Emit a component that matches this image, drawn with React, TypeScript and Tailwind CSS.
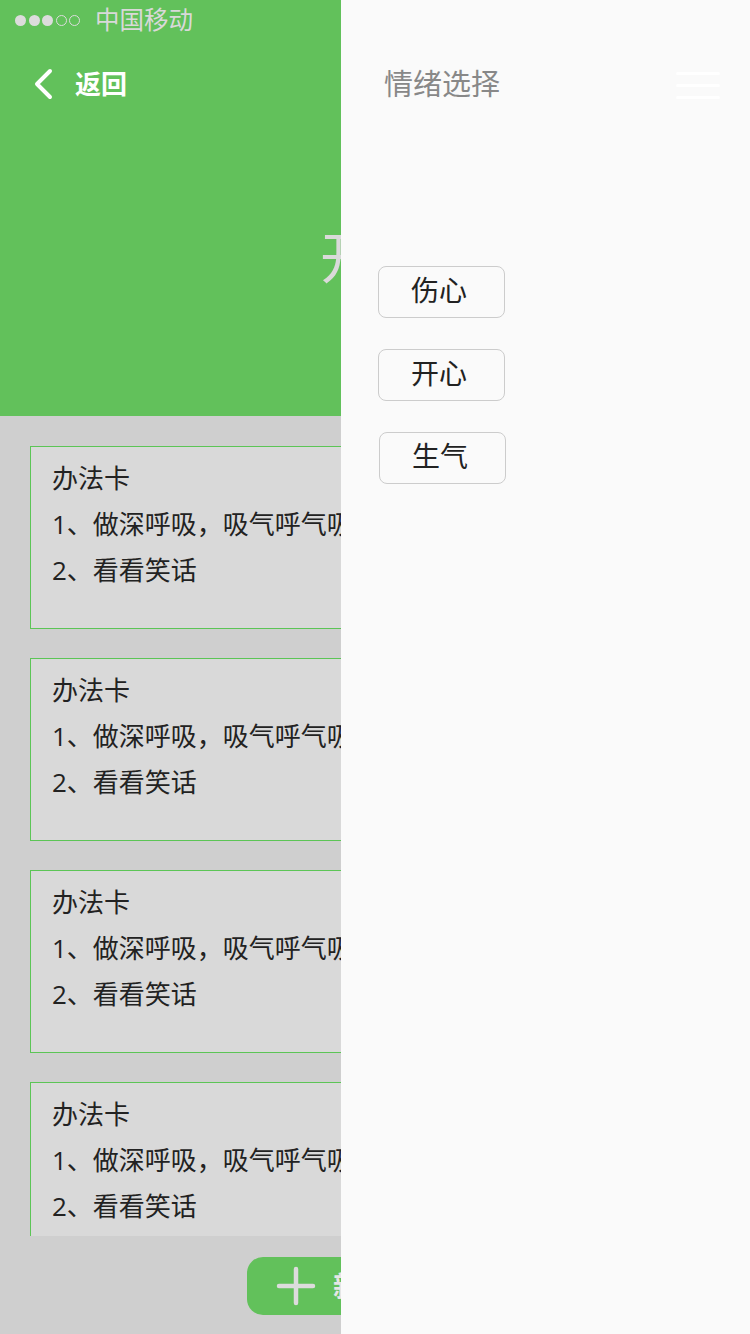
import React from "react";

const font = { fontFamily: '"Open Sans", "Noto Sans CJK SC", sans-serif' };

function Card() {
  return (
    <div className="shrink-0 w-[690px] h-[183px] bg-[#d9d9d9] border border-[#5cc556] pl-[21px] pt-[8px] text-[26px] leading-[46px] text-[#222222]">
      <div>办法卡</div>
      <div className="whitespace-nowrap">1、做深呼吸，吸气呼气吸气呼气吸气呼气</div>
      <div>2、看看笑话</div>
    </div>
  );
}

function MainPage() {
  return (
    <div className="flex flex-col w-[750px] h-[1334px] shrink-0 bg-[#cfcfcf]">
      <div className="h-[416px] bg-[#62c15b] flex flex-col shrink-0">
        <div className="h-[40px] flex items-center pl-[15px] gap-[15px]">
          <div className="flex items-center gap-[2.5px]">
            <span className="w-[11px] h-[11px] rounded-full bg-[#dcdcdc]" />
            <span className="w-[11px] h-[11px] rounded-full bg-[#dcdcdc]" />
            <span className="w-[11px] h-[11px] rounded-full bg-[#dcdcdc]" />
            <span className="w-[11px] h-[11px] rounded-full border border-[#dcdcdc]" />
            <span className="w-[11px] h-[11px] rounded-full border border-[#dcdcdc]" />
          </div>
          <span className="text-[24.5px] text-[#d9d9d9] leading-none">中国移动</span>
        </div>
        <div className="h-[88px] flex items-center pl-[33px] gap-[22px]">
          <svg width="20" height="32" viewBox="0 0 20 32">
            <path d="M17 3 L4 16 L17 29" fill="none" stroke="#ffffff" strokeWidth="4" strokeLinecap="round" strokeLinejoin="round" />
          </svg>
          <span className="text-[26px] font-bold text-white leading-none">返回</span>
        </div>
        <div className="flex justify-center pt-[100px] pl-[2px]">
          <span className="text-[56px] text-[#dadada] leading-none">开心</span>
        </div>
      </div>
      <div className="h-[820px] overflow-hidden px-[30px] pt-[30px] flex flex-col gap-[29px] shrink-0">
        <Card />
        <Card />
        <Card />
        <Card />
      </div>
      <div className="flex-1 flex justify-center pt-[21px]">
        <div className="w-[256px] h-[58px] rounded-[16px] bg-[#62c15b] flex items-center pl-[29px] gap-[17px]">
          <svg width="40" height="40" viewBox="0 0 40 40">
            <path d="M20 3 V37 M3 20 H37" stroke="#dcdcdc" strokeWidth="4.5" strokeLinecap="round" />
          </svg>
          <span className="text-[28px] font-bold text-[#e6e6e6] leading-none">新增办法卡</span>
        </div>
      </div>
    </div>
  );
}

export default function App() {
  return (
    <div className="flex w-[750px] h-[1334px] overflow-hidden" style={font}>
      <div className="w-[341px] h-[1334px] overflow-hidden shrink-0">
        <MainPage />
      </div>

      <div className="w-[409px] h-[1334px] bg-[#fafafa] flex flex-col shrink-0">
        <div className="h-[168px] flex items-start justify-between pl-[43px] pr-[30px] pt-[65px]">
          <span className="text-[29px] text-[#888888] leading-[38px]">情绪选择</span>
          <div className="flex flex-col gap-[9.5px] pt-[7px]">
            <span className="w-[44px] h-[2.5px] bg-white rounded" />
            <span className="w-[44px] h-[2.5px] bg-white rounded" />
            <span className="w-[44px] h-[2.5px] bg-white rounded" />
          </div>
        </div>
        <div className="flex flex-col gap-[31px] pl-[37px] pt-[98px]">
          {["伤心", "开心", "生气"].map((t, i) => (
            <div
              key={t}
              className={`w-[127px] h-[52px] rounded-[8px] border border-[#cccccc] flex items-center justify-center pb-[4px] pr-[5px] text-[28px] text-[#222222] leading-none ${
                i === 2 ? "ml-[1px]" : ""
              }`}
            >
              {t}
            </div>
          ))}
        </div>
      </div>
    </div>
  );
}
